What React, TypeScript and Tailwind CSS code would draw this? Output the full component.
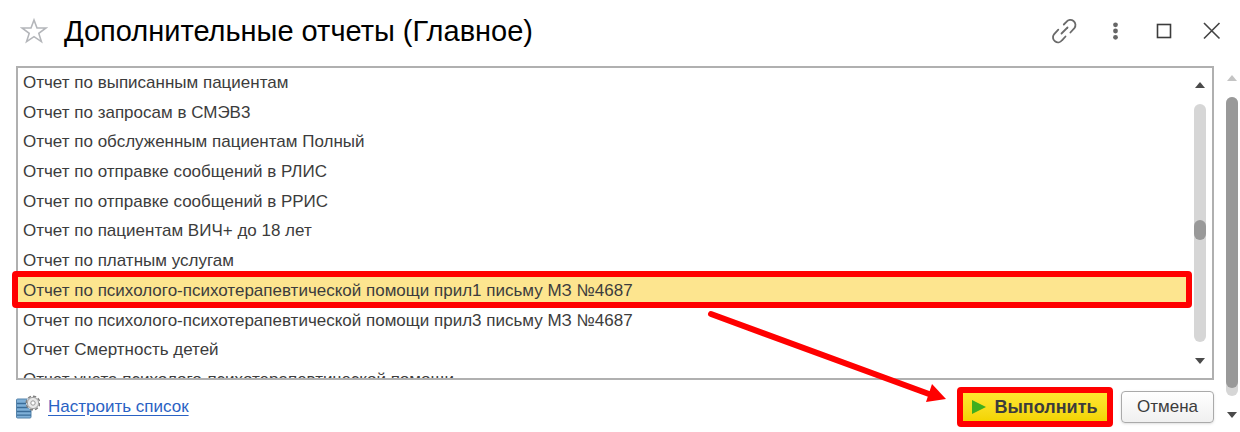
import { useState } from "react";

const REPORTS = [
  "Отчет по выписанным пациентам",
  "Отчет по запросам в СМЭВ3",
  "Отчет по обслуженным пациентам Полный",
  "Отчет по отправке сообщений в РЛИС",
  "Отчет по отправке сообщений в РРИС",
  "Отчет по пациентам ВИЧ+ до 18 лет",
  "Отчет по платным услугам",
  "Отчет по психолого-психотерапевтической помощи прил1 письму МЗ №4687",
  "Отчет по психолого-психотерапевтической помощи прил3 письму МЗ №4687",
  "Отчет Смертность детей",
  "Отчет учета психолого-психотерапевтической помощи",
];

function StarIcon() {
  return (
    <svg className="h-7 w-7" viewBox="0 0 28 28" fill="none" stroke="#b4b6ba" strokeWidth="1.6">
      <path d="M14 3l3 8h9l-7.2 5.4 2.6 8.2-7.4-4.9-7.4 4.9 2.6-8.2L2 11h9z" />
    </svg>
  );
}

function LinkIcon() {
  return (
    <svg className="h-7 w-7" viewBox="0 0 28 28" fill="none" stroke="#6a6a6a" strokeWidth="1.8" strokeLinecap="round">
      <path d="M11.5 16.5l6-6" />
      <path d="M13.8 7.5l2.6-2.6a5 5 0 0 1 8 6.2l-4 4.4" />
      <path d="M15.5 19.5l-3.5 3.8a5 5 0 0 1-8-6l4.3-4.6" />
    </svg>
  );
}

function DotsIcon() {
  return (
    <svg className="h-5 w-5" viewBox="0 0 20 20" fill="#666">
      <circle cx="9.5" cy="3.8" r="2.4" />
      <circle cx="9.5" cy="10" r="2.4" />
      <circle cx="9.5" cy="16.3" r="2.4" />
    </svg>
  );
}

function MaximizeIcon() {
  return (
    <svg className="h-5 w-5" viewBox="0 0 20 20" fill="none" stroke="#3c3c3c" strokeWidth="1.6">
      <rect x="3.5" y="3.5" width="13" height="13" />
    </svg>
  );
}

function CloseIcon() {
  return (
    <svg className="h-5 w-5" viewBox="0 0 20 20" fill="none" stroke="#444" strokeWidth="1.6">
      <path d="M2 2l15.500 15.500M17.500 2l-15.500 15.500" />
    </svg>
  );
}

function ListSettingsIcon() {
  return (
    <svg className="h-6 w-6" viewBox="0 0 24 24">
      <rect x="0.5" y="4" width="14.500" height="19" rx="1" fill="#7fb0d8" stroke="#5583aa" />
      <path d="M1 8.500h14M1 12.500h14M1 16.500h14M1 20.200h14" stroke="#3a6c98" strokeWidth="1.3" />
      <circle cx="17" cy="8" r="6.800" fill="#f0f0f0" stroke="#808080" strokeWidth="1.400" strokeDasharray="3.300 2" />
      <circle cx="17" cy="8" r="5.600" fill="#e9e9e9" stroke="#999" strokeWidth="0.900" />
      <circle cx="17" cy="8" r="2.200" fill="#fff" stroke="#999" strokeWidth="1" />
    </svg>
  );
}

function Triangle({ up, className }: { up?: boolean; className: string }) {
  return (
    <svg className={className} viewBox="0 0 10 6" fill="currentColor">
      <path d={up ? "M5 0l5 6H0z" : "M0 0h10L5 6z"} />
    </svg>
  );
}

export default function App() {
  const [selected, setSelected] = useState(7);

  return (
    <div className="flex bg-white pr-0.5 font-['Liberation_Sans',Arial,sans-serif] text-[#3c3c3c]">
      <main className="min-w-0 flex-1 pl-4 pr-3">
        <header className="flex h-[66px] items-center pb-1">
          <button type="button" aria-label="В избранное" className="mr-4 ml-1">
            <StarIcon />
          </button>
          <h1 className="flex-1 text-[29px] leading-8 text-black">Дополнительные отчеты (Главное)</h1>
          <div className="-mr-2 flex items-center gap-7">
            <button type="button" aria-label="Ссылка"><LinkIcon /></button>
            <button type="button" aria-label="Ещё"><DotsIcon /></button>
            <button type="button" aria-label="Развернуть"><MaximizeIcon /></button>
            <button type="button" aria-label="Закрыть"><CloseIcon /></button>
          </div>
        </header>

        <section className="relative">
          <div className="flex h-[314px] overflow-hidden border-2 border-[#b0b0b0]">
            <ul role="listbox" aria-label="Отчеты" className="grid h-[327px] flex-1 auto-rows-fr">
              {REPORTS.map((name, i) => (
                <li
                  key={name}
                  role="option"
                  aria-selected={i === selected}
                  onClick={() => setSelected(i)}
                  className={`flex items-center pl-[5px] text-[17px] leading-6 whitespace-nowrap ${
                    i === selected ? "bg-[#fde58f]" : ""
                  }`}
                >
                  {name}
                </li>
              ))}
            </ul>
            <div className="flex w-6 flex-col items-center py-3.5">
              <Triangle up className="h-1.5 w-2.5 text-[#4a4a4a]" />
              <div className="my-4 w-3 flex-1 rounded-full bg-[#d6d6d6] pt-[116px]">
                <div className="h-5 rounded-full bg-[#999]" />
              </div>
              <Triangle className="h-1.5 w-2.5 text-[#4a4a4a]" />
            </div>
          </div>
          {/* callout frame around the selected report */}
          <div className="pointer-events-none absolute top-[205px] right-[22px] -left-1 h-[37px] rounded-sm border-6 border-[#f00]" />
        </section>

        <footer className="relative flex items-center pt-[7px] pb-[6px]">
          <ListSettingsIcon />
          <a href="#settings" className="ml-2 text-[17px] leading-6 text-[#2a62c4] underline underline-offset-3">
            Настроить список
          </a>
          <div className="ml-auto flex items-center gap-2">
            <button
              type="button"
              className="flex h-10 w-[156px] items-center justify-center gap-2 rounded-sm border-6 border-[#f00] bg-linear-to-b from-[#ffe72e] to-[#f3d400] text-lg leading-6 font-bold"
            >
              <svg className="h-3.5 w-3.5" viewBox="0 0 14 14" fill="#3fae1f">
                <path d="M0 0l14 7-14 7z" />
              </svg>
              Выполнить
            </button>
            <button
              type="button"
              className="h-8 w-[93px] rounded-sm border border-[#aaa] bg-linear-to-b from-white to-[#f0f0f0] text-[17px] leading-6 shadow-sm"
            >
              Отмена
            </button>
          </div>
          {/* arrow from the report to the run button */}
          <svg
            className="pointer-events-none absolute right-[266px] bottom-[26px] h-[98px] w-[242px]"
            viewBox="0 0 242 98"
          >
            <path d="M5 5l218 80" stroke="#f00" strokeWidth="6" strokeLinecap="round" />
            <path d="M226 75l14 15-20 3z" fill="#f00" />
          </svg>
        </footer>
      </main>

      <aside className="flex w-3 flex-col items-center pt-[75px] pb-[15px]">
        <Triangle up className="h-1.5 w-2.5 text-[#c4c4c4]" />
        <div className="mt-4 mb-4 w-3 flex-1 rounded-full bg-[#d6d6d6] pb-2">
          <div className="h-full rounded-full bg-[#999]" />
        </div>
        <Triangle className="h-1.5 w-2.5 text-[#4a4a4a]" />
      </aside>
    </div>
  );
}
